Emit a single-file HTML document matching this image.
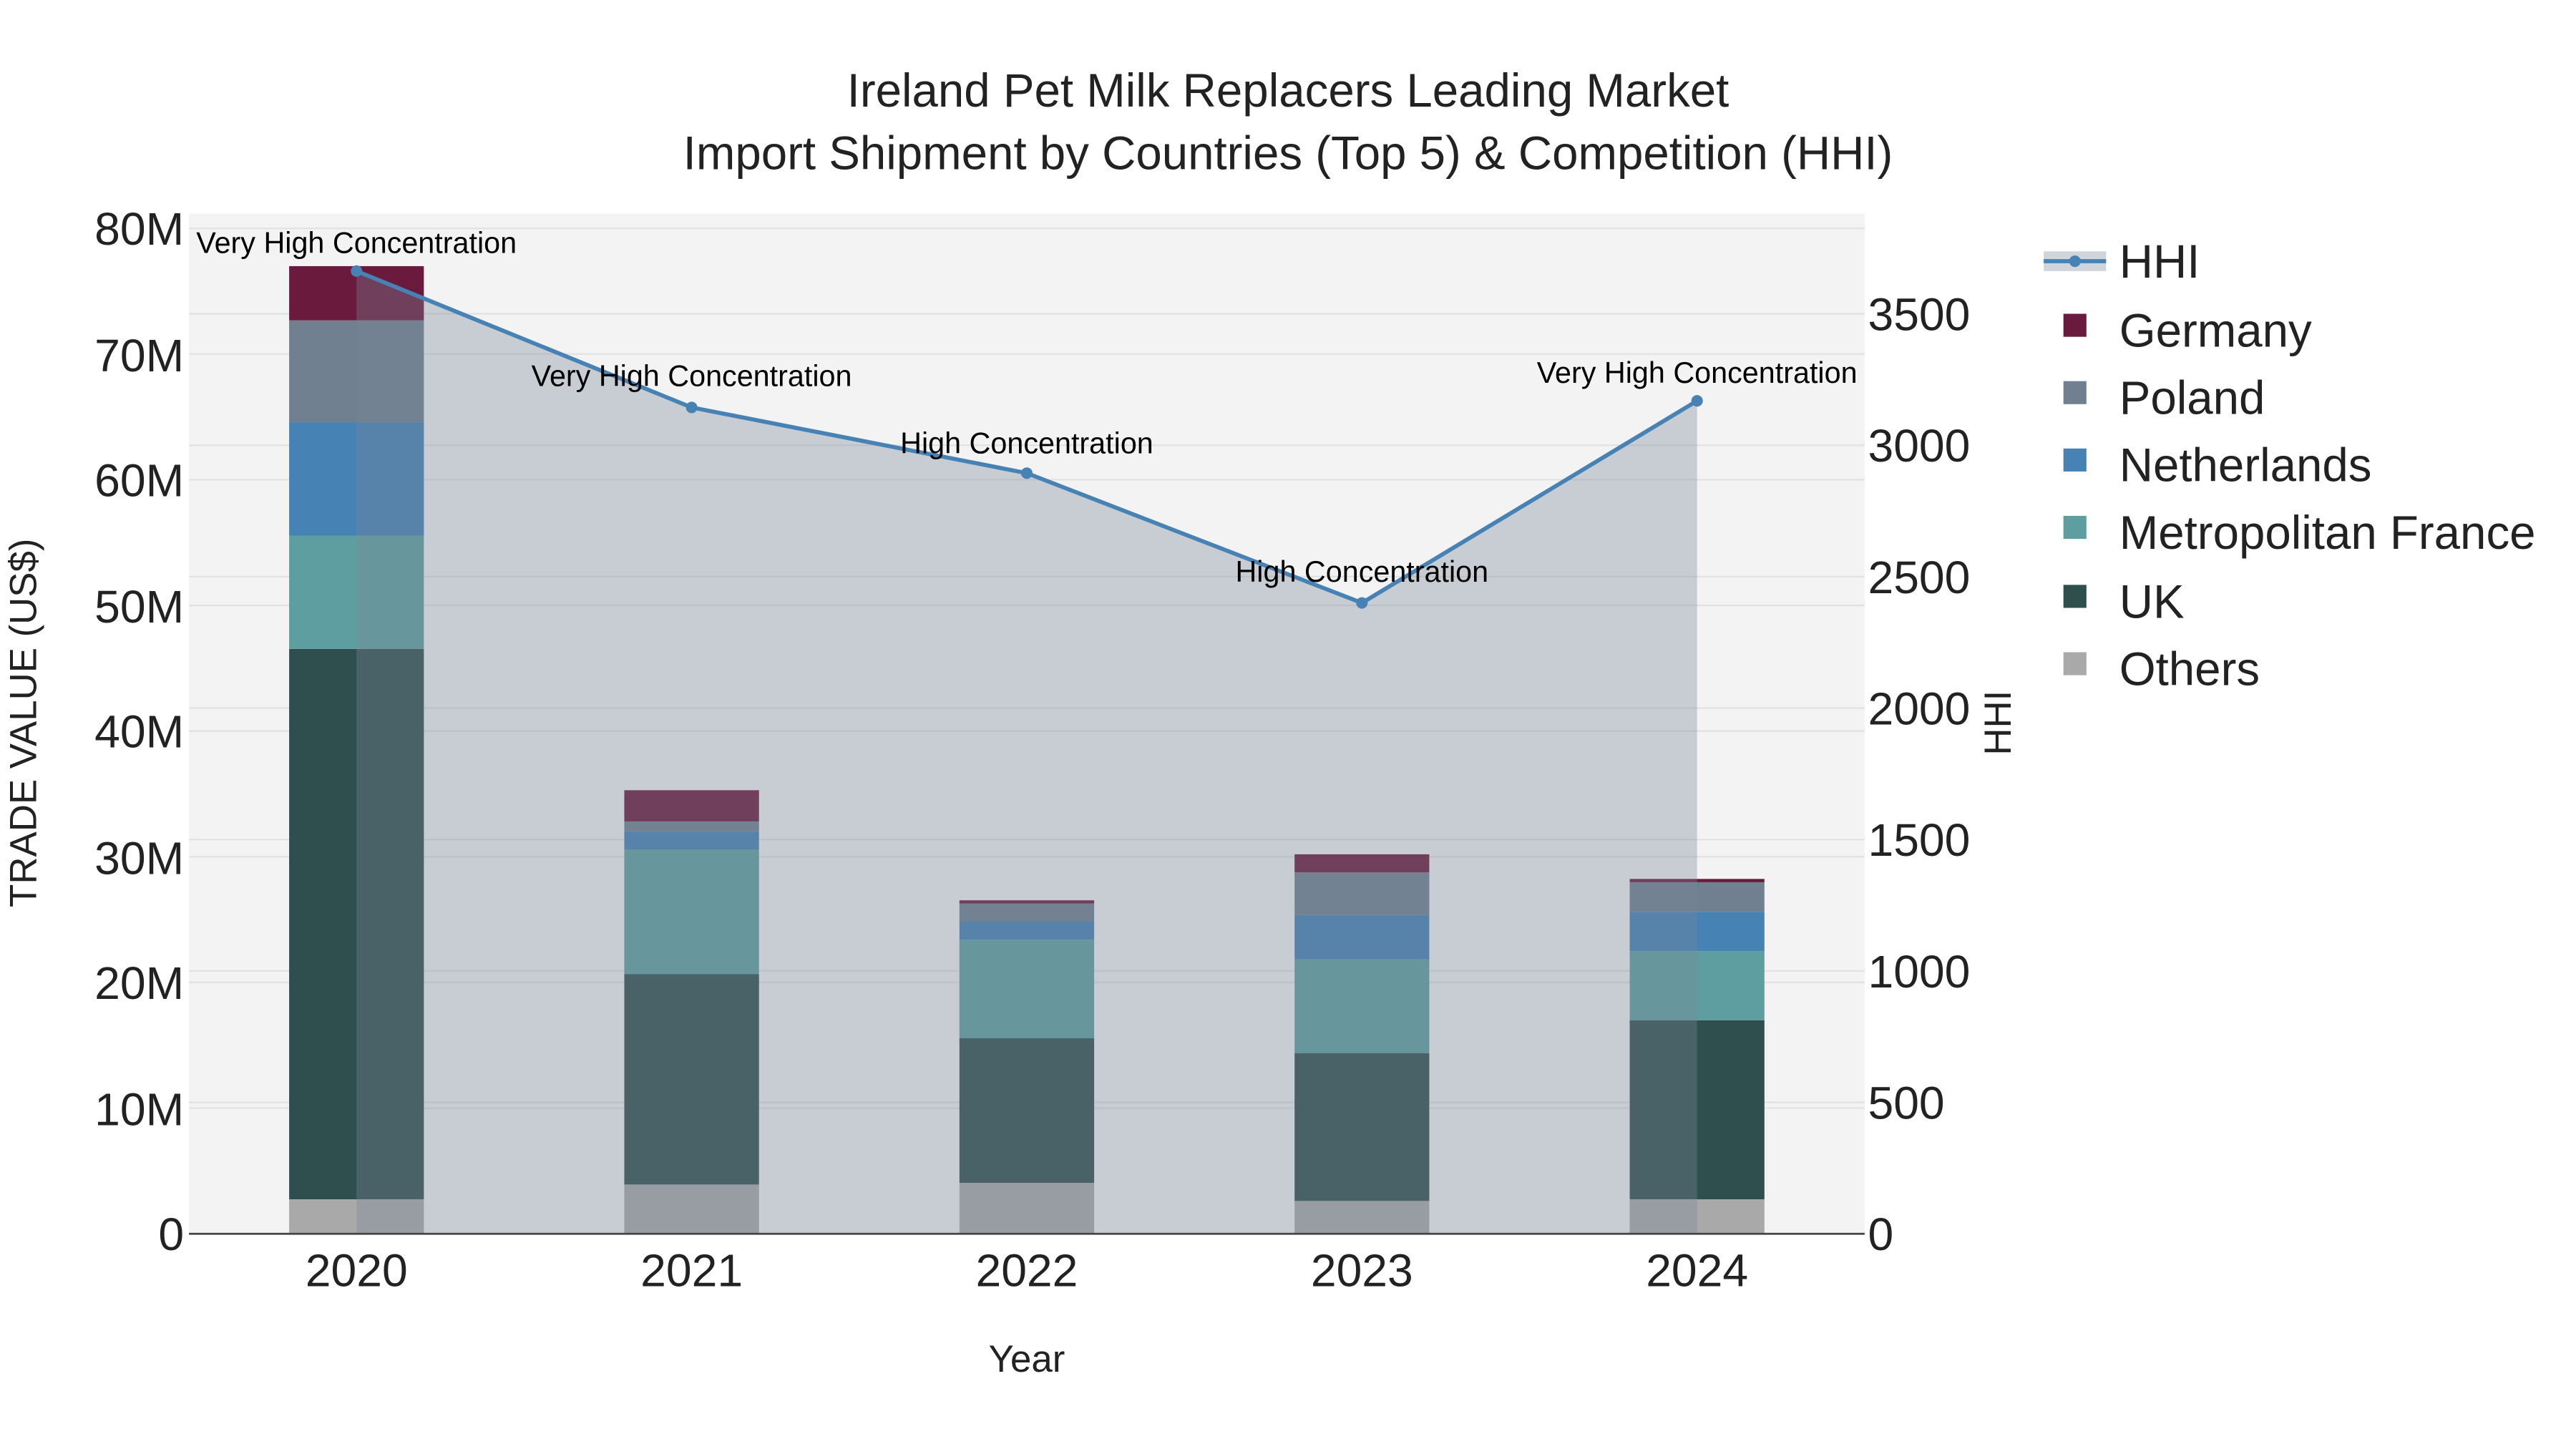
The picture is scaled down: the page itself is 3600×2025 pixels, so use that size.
<!DOCTYPE html>
<html><head><meta charset="utf-8"><style>html,body{margin:0;padding:0;background:#fff;}svg{display:block;}</style></head>
<body>
<svg width="3600" height="2025" viewBox="0 0 1568 882" xmlns="http://www.w3.org/2000/svg" font-family="Liberation Sans, Arial, sans-serif">
<rect x="0" y="0" width="1568" height="882" fill="#fff"/>
<rect x="115" y="130" width="1020" height="621" fill="#f3f3f3"/>
<g stroke="#e2e2e2" stroke-width="1">
<line x1="115" x2="1135" y1="674.5" y2="674.5"/><line x1="115" x2="1135" y1="598" y2="598"/><line x1="115" x2="1135" y1="521.5" y2="521.5"/><line x1="115" x2="1135" y1="445" y2="445"/><line x1="115" x2="1135" y1="368.5" y2="368.5"/><line x1="115" x2="1135" y1="292" y2="292"/><line x1="115" x2="1135" y1="215.5" y2="215.5"/><line x1="115" x2="1135" y1="139" y2="139"/>
<line x1="115" x2="1135" y1="671" y2="671"/><line x1="115" x2="1135" y1="591" y2="591"/><line x1="115" x2="1135" y1="511" y2="511"/><line x1="115" x2="1135" y1="431" y2="431"/><line x1="115" x2="1135" y1="351" y2="351"/><line x1="115" x2="1135" y1="271" y2="271"/><line x1="115" x2="1135" y1="191" y2="191"/>
</g>
<g>
<rect x="176" y="730" width="82" height="21" fill="#a9a9a9"/><rect x="176" y="395" width="82" height="335" fill="#2f4f4f"/><rect x="176" y="326" width="82" height="69" fill="#5f9ea0"/><rect x="176" y="257" width="82" height="69" fill="#4682b4"/><rect x="176" y="195" width="82" height="62" fill="#708090"/><rect x="176" y="162" width="82" height="33" fill="#6a1a3c"/>
<rect x="380" y="721" width="82" height="30" fill="#a9a9a9"/><rect x="380" y="593" width="82" height="128" fill="#2f4f4f"/><rect x="380" y="517" width="82" height="76" fill="#5f9ea0"/><rect x="380" y="506" width="82" height="11" fill="#4682b4"/><rect x="380" y="500" width="82" height="6" fill="#708090"/><rect x="380" y="481" width="82" height="19" fill="#6a1a3c"/>
<rect x="584" y="720" width="82" height="31" fill="#a9a9a9"/><rect x="584" y="632" width="82" height="88" fill="#2f4f4f"/><rect x="584" y="572" width="82" height="60" fill="#5f9ea0"/><rect x="584" y="561" width="82" height="11" fill="#4682b4"/><rect x="584" y="550" width="82" height="11" fill="#708090"/><rect x="584" y="548" width="82" height="2" fill="#6a1a3c"/>
<rect x="788" y="731" width="82" height="20" fill="#a9a9a9"/><rect x="788" y="641" width="82" height="90" fill="#2f4f4f"/><rect x="788" y="584" width="82" height="57" fill="#5f9ea0"/><rect x="788" y="557" width="82" height="27" fill="#4682b4"/><rect x="788" y="531" width="82" height="26" fill="#708090"/><rect x="788" y="520" width="82" height="11" fill="#6a1a3c"/>
<rect x="992" y="730" width="82" height="21" fill="#a9a9a9"/><rect x="992" y="621" width="82" height="109" fill="#2f4f4f"/><rect x="992" y="579" width="82" height="42" fill="#5f9ea0"/><rect x="992" y="555" width="82" height="24" fill="#4682b4"/><rect x="992" y="537" width="82" height="18" fill="#708090"/><rect x="992" y="535" width="82" height="2" fill="#6a1a3c"/>
</g>
<polygon points="217,751 217,165 421,248 625,288 829,367 1033,244 1033,751" fill="rgba(119,136,153,0.35)"/>
<polyline points="217,165 421,248 625,288 829,367 1033,244" fill="none" stroke="#4682b4" stroke-width="2.5"/>
<g fill="#4682b4"><circle cx="217" cy="165" r="3.5"/><circle cx="421" cy="248" r="3.5"/><circle cx="625" cy="288" r="3.5"/><circle cx="829" cy="367" r="3.5"/><circle cx="1033" cy="244" r="3.5"/></g>
<line x1="115" x2="1135" y1="751" y2="751" stroke="#444" stroke-width="1.2"/>
<g font-size="18" fill="#000" text-anchor="middle">
<text x="217" y="154">Very High Concentration</text>
<text x="421" y="235">Very High Concentration</text>
<text x="625" y="276">High Concentration</text>
<text x="829" y="354">High Concentration</text>
<text x="1033" y="233">Very High Concentration</text>
</g>
<g font-size="28.5" fill="#222" text-anchor="middle">
<text x="784" y="65">Ireland Pet Milk Replacers Leading Market</text>
<text x="784" y="103">Import Shipment by Countries (Top 5) &amp; Competition (HHI)</text>
</g>
<g font-size="28" fill="#222" text-anchor="end">
<text x="112" y="761">0</text><text x="112" y="685">10M</text><text x="112" y="608">20M</text><text x="112" y="532">30M</text><text x="112" y="455">40M</text><text x="112" y="379">50M</text><text x="112" y="302">60M</text><text x="112" y="226">70M</text><text x="112" y="149">80M</text>
</g>
<g font-size="28" fill="#222">
<text x="1137" y="761">0</text><text x="1137" y="681">500</text><text x="1137" y="601">1000</text><text x="1137" y="521">1500</text><text x="1137" y="441">2000</text><text x="1137" y="361">2500</text><text x="1137" y="281">3000</text><text x="1137" y="201">3500</text>
</g>
<g font-size="28" fill="#222" text-anchor="middle">
<text x="217" y="783">2020</text><text x="421" y="783">2021</text><text x="625" y="783">2022</text><text x="829" y="783">2023</text><text x="1033" y="783">2024</text>
</g>
<text x="625" y="835" font-size="23" fill="#222" text-anchor="middle">Year</text>
<text transform="translate(22,440) rotate(-90)" font-size="23" fill="#222" text-anchor="middle">TRADE VALUE (US$)</text>
<text transform="translate(1224,440) rotate(-90)" font-size="23" fill="#222" text-anchor="middle">HHI</text>
<rect x="1244" y="153" width="38" height="12" fill="rgba(119,136,153,0.35)"/>
<line x1="1244" x2="1282" y1="159" y2="159" stroke="#4682b4" stroke-width="2.5"/><circle cx="1263" cy="159" r="3.5" fill="#4682b4"/>
<rect x="1256" y="191" width="14" height="14" fill="#6a1a3c"/>
<rect x="1256" y="232" width="14" height="14" fill="#708090"/>
<rect x="1256" y="273" width="14" height="14" fill="#4682b4"/>
<rect x="1256" y="314" width="14" height="14" fill="#5f9ea0"/>
<rect x="1256" y="356" width="14" height="14" fill="#2f4f4f"/>
<rect x="1256" y="397" width="14" height="14" fill="#a9a9a9"/>
<g font-size="28.5" fill="#222">
<text x="1290" y="169">HHI</text><text x="1290" y="211">Germany</text><text x="1290" y="252">Poland</text><text x="1290" y="293">Netherlands</text><text x="1290" y="334">Metropolitan France</text><text x="1290" y="376">UK</text><text x="1290" y="417">Others</text>
</g>
</svg>
</body></html>
